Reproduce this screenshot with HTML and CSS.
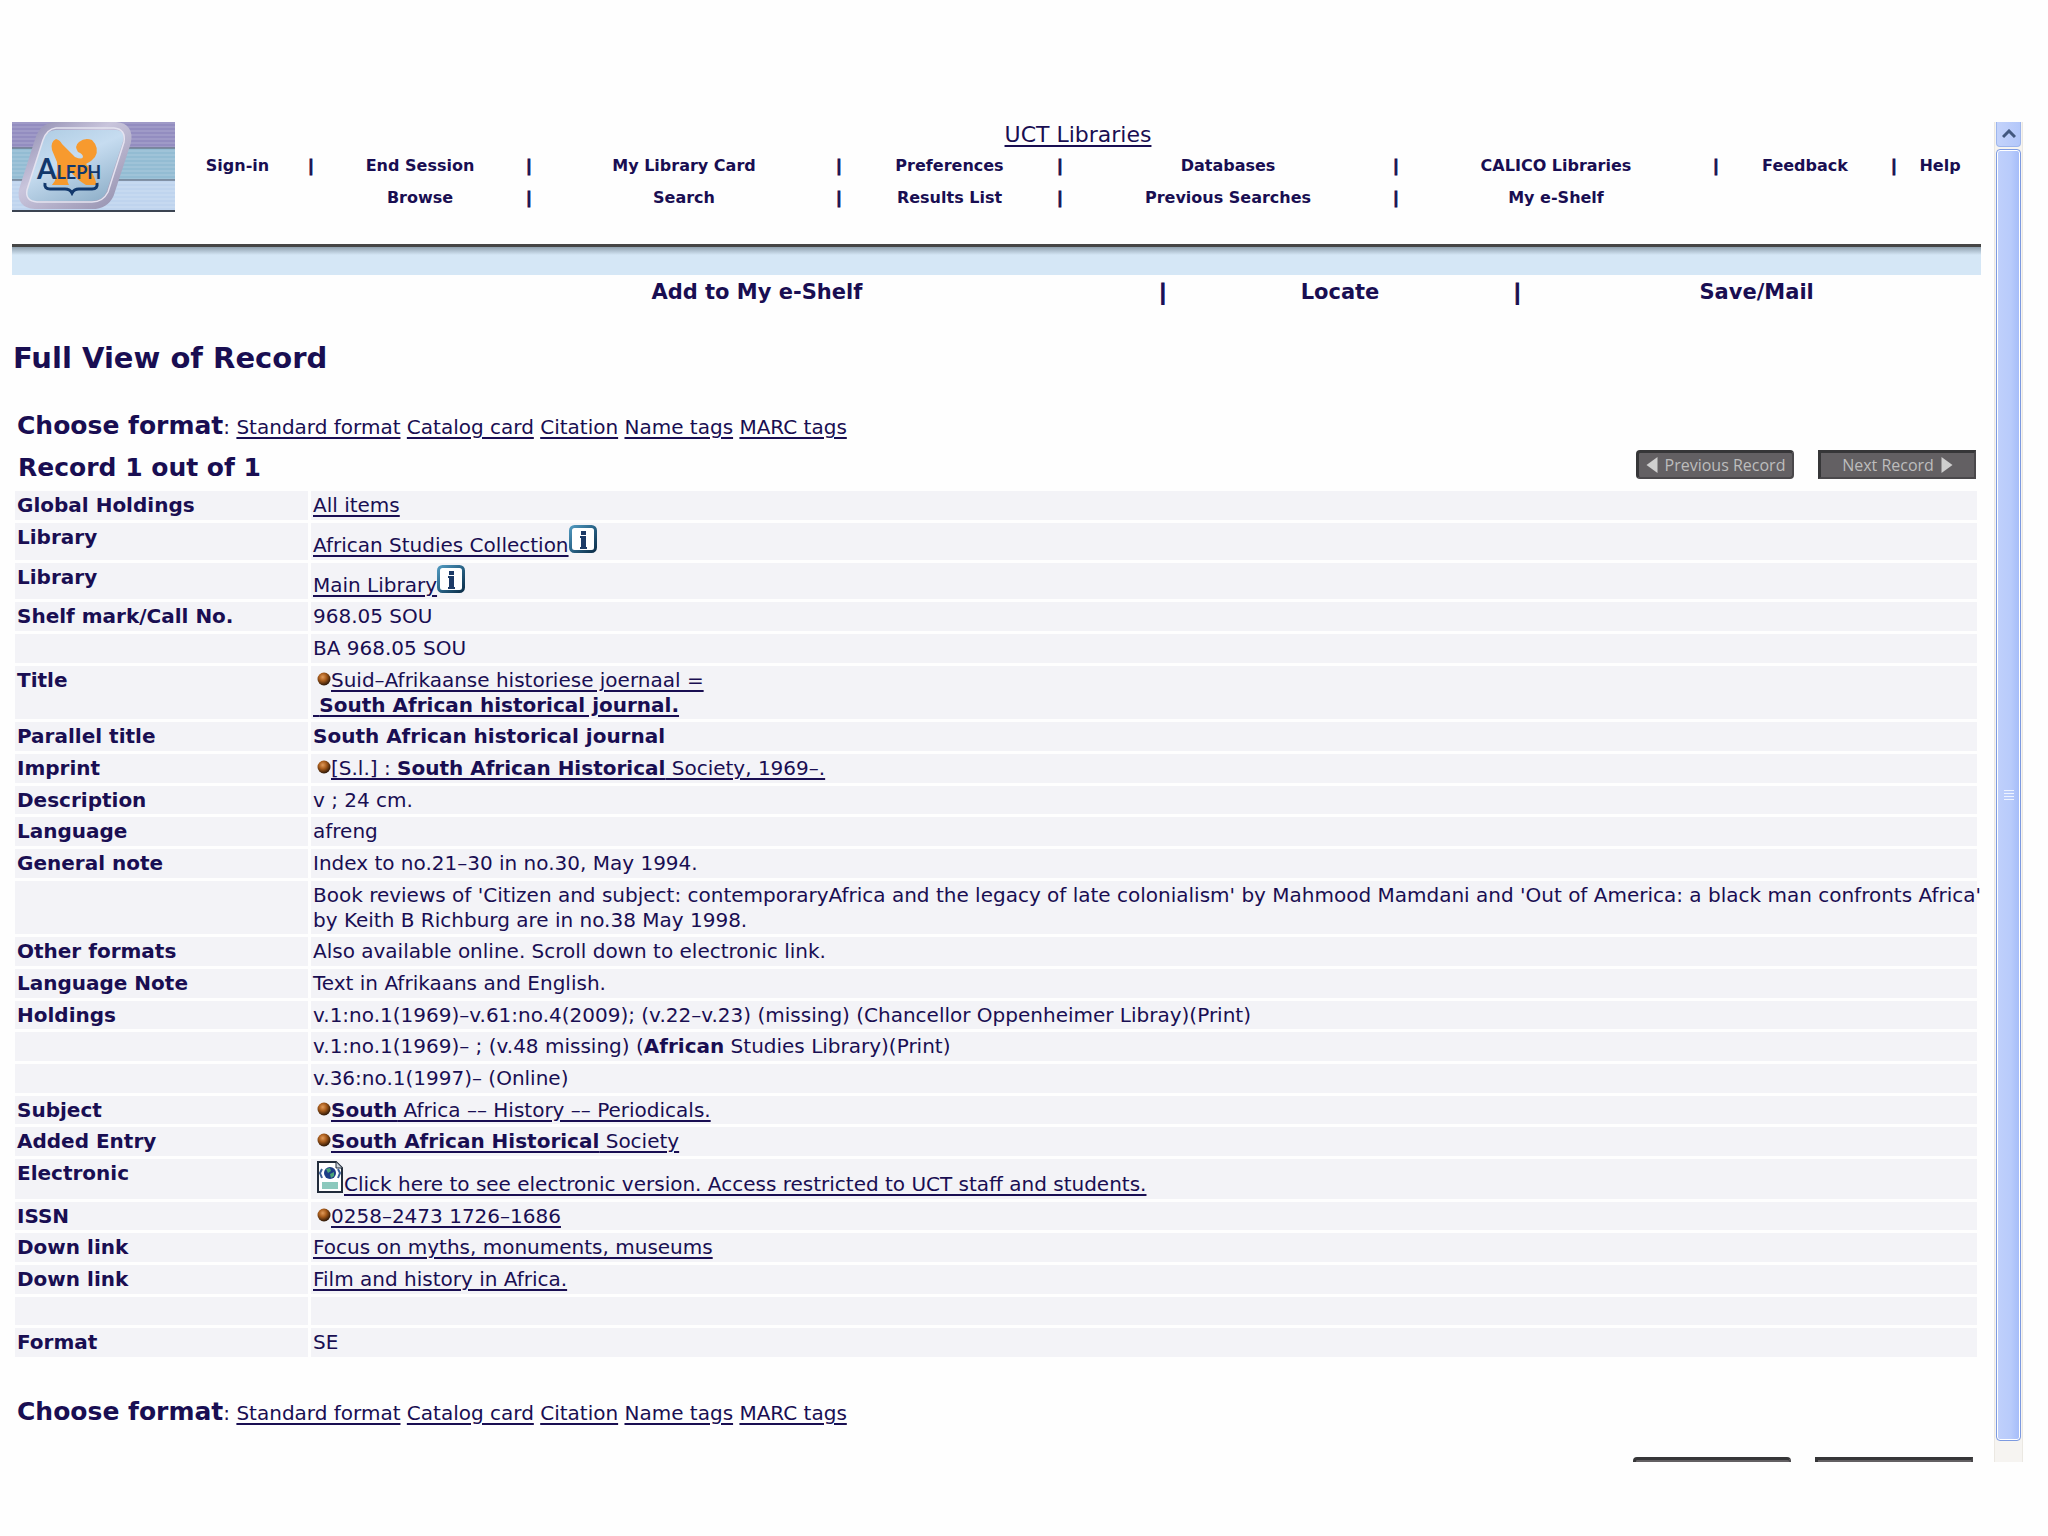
FILE: index.html
```
<!DOCTYPE html>
<html lang="en">
<head>
    <meta charset="UTF-8">
    <meta name="viewport" content="width=device-width, initial-scale=1.0">
    <title>UCT Libraries - Full View of Record</title>
    <link rel="stylesheet" href="styles.css">
</head>
<body>
    <!-- shared icons -->
    <svg class="sprite" aria-hidden="true">
        <defs>
            <linearGradient id="infoEdge" x1="0" y1="0" x2="1" y2="1">
                <stop offset="0" stop-color="#4f97bd"/>
                <stop offset="0.5" stop-color="#2a6488"/>
                <stop offset="1" stop-color="#0c2f4a"/>
            </linearGradient>
            <radialGradient id="ball" cx="0.4" cy="0.35" r="0.65">
                <stop offset="0" stop-color="#e09a5a"/>
                <stop offset="0.45" stop-color="#a85c1c"/>
                <stop offset="1" stop-color="#2c1606"/>
            </radialGradient>
        </defs>
        <symbol id="info" viewBox="0 0 28 28">
            <rect x="1.5" y="1.5" width="25" height="25" rx="4" fill="#fff" stroke="url(#infoEdge)" stroke-width="3"/>
            <path d="M12 6h5v4h-5zM11 11h6v11h1v2h-7v-2h1v-9h-1z" fill="#1c3a66"/>
        </symbol>
        <symbol id="dot" viewBox="0 0 14 14">
            <circle cx="7" cy="7" r="6.5" fill="url(#ball)"/>
        </symbol>
    </svg>

    <div class="window">
        <main class="page">
            <header class="header">
                <svg class="logo" viewBox="0 0 163 90" role="img" aria-label="Aleph">
                    <defs>
                        <linearGradient id="plate" x1="0" y1="0" x2="0.6" y2="1">
                            <stop offset="0" stop-color="#a9c8e0"/>
                            <stop offset="0.5" stop-color="#c6dcf0"/>
                            <stop offset="1" stop-color="#93b3cc"/>
                        </linearGradient>
                        <linearGradient id="rim" x1="0" y1="0" x2="1" y2="1">
                            <stop offset="0" stop-color="#8f8cb0"/>
                            <stop offset="0.4" stop-color="#c9c5dc"/>
                            <stop offset="1" stop-color="#9490ae"/>
                        </linearGradient>
                        <pattern id="lines" width="8" height="4" patternUnits="userSpaceOnUse">
                            <path d="M0 1h8" stroke="#fff" stroke-opacity="0.22"/>
                        </pattern>
                    </defs>
                    <rect width="163" height="26" fill="#938dc0"/>
                    <rect y="26" width="163" height="32" fill="#93bcd3"/>
                    <rect y="58" width="163" height="32" fill="#bfd4ee"/>
                    <rect width="163" height="90" fill="url(#lines)"/>
                    <path d="M0 26h163M0 58h163" stroke="#6f7c90" stroke-width="1.5"/>
                    <path d="M0 89h163" stroke="#3c4452" stroke-width="2"/>
                    <path d="M43 4H104Q118 5 115 20L98 72Q93 83 80 83H23Q8 82 11 68L27 18Q31 5 43 4Z" fill="url(#plate)" stroke="url(#rim)" stroke-width="8"/>
                    <path d="M44 6H102Q114 7 112 20L96 70Q91 80 80 80H25Q13 79 15 68L31 18Q35 7 44 6Z" fill="none" stroke="#e4e3f0" stroke-width="1.5"/>
                    <path d="M40 28Q38 20 44 17Q48 18 50 22L63 35Q70 38 71 35Q71 32 66 30Q62 24 67 20Q73 15 80 18Q88 26 83 35Q79 40 74 42Q80 47 85 63H74Q64 57 59 50Q53 56 57 63H40Q47 55 45 40Z" fill="#f79a2e"/>
                    <text x="25" y="57" class="logo-text"><tspan class="logo-cap">A</tspan>LEPH</text>
                    <path d="M33 61Q32 67 38 67H53Q58 67 60 71Q62 67 67 67H80Q86 67 85 61" fill="none" stroke="#12386c" stroke-width="3"/>
                </svg>
                <nav class="nav">
                    <a class="nav-title" href="#">UCT Libraries</a>
                    <div class="nav-row">
                        <a class="first" href="#">Sign-in</a><span>|</span>
                        <a href="#">End Session</a><span>|</span>
                        <a href="#">My Library Card</a><span>|</span>
                        <a href="#">Preferences</a><span>|</span>
                        <a href="#">Databases</a><span>|</span>
                        <a href="#">CALICO Libraries</a><span>|</span>
                        <a href="#">Feedback</a><span>|</span>
                        <a href="#">Help</a>
                    </div>
                    <div class="nav-row">
                        <i></i><i></i>
                        <a href="#">Browse</a><span>|</span>
                        <a href="#">Search</a><span>|</span>
                        <a href="#">Results List</a><span>|</span>
                        <a href="#">Previous Searches</a><span>|</span>
                        <a href="#">My e-Shelf</a>
                    </div>
                </nav>
            </header>

            <div class="band"></div>

            <nav class="actions">
                <a class="add" href="#">Add to My e-Shelf</a><span>|</span>
                <a href="#">Locate</a><span>|</span>
                <a class="save" href="#">Save/Mail</a>
            </nav>

            <h1>Full View of Record</h1>

            <p class="formats">
                <strong>Choose format</strong>:
                <a href="#">Standard format</a>
                <a href="#">Catalog card</a>
                <a href="#">Citation</a>
                <a href="#">Name tags</a>
                <a href="#">MARC tags</a>
            </p>

            <div class="record-bar">
                <h2>Record 1 out of 1</h2>
                <div class="pager">
                    <button type="button" class="rounded"><svg viewBox="0 0 11 16"><path d="M11 0v16L0 8z"/></svg>Previous Record</button>
                    <button type="button">Next Record<svg viewBox="0 0 11 16"><path d="M0 0v16l11-8z"/></svg></button>
                </div>
            </div>

            <table class="record">
                <tr><th>Global Holdings</th><td><a href="#">All items</a></td></tr>
                <tr><th>Library</th><td><a href="#">African Studies Collection</a><svg class="info"><use href="#info"/></svg></td></tr>
                <tr><th>Library</th><td><a href="#">Main Library</a><svg class="info"><use href="#info"/></svg></td></tr>
                <tr><th>Shelf mark/Call No.</th><td>968.05 SOU</td></tr>
                <tr><th></th><td>BA 968.05 SOU</td></tr>
                <tr><th>Title</th><td><svg class="dot"><use href="#dot"/></svg><a href="#">Suid–Afrikaanse historiese joernaal =<br>&nbsp;<b>South African historical journal.</b></a></td></tr>
                <tr><th>Parallel title</th><td><b>South African historical journal</b></td></tr>
                <tr><th>Imprint</th><td><svg class="dot"><use href="#dot"/></svg><a href="#">[S.l.] : <b>South African Historical</b> Society, 1969–.</a></td></tr>
                <tr><th>Description</th><td>v ; 24 cm.</td></tr>
                <tr><th>Language</th><td>afreng</td></tr>
                <tr><th>General note</th><td>Index to no.21–30 in no.30, May 1994.</td></tr>
                <tr><th></th><td class="note">Book reviews of 'Citizen and subject: contemporaryAfrica and the legacy of late colonialism' by Mahmood Mamdani and 'Out of America: a black man confronts Africa'<br>by Keith B Richburg are in no.38 May 1998.</td></tr>
                <tr><th>Other formats</th><td>Also available online. Scroll down to electronic link.</td></tr>
                <tr><th>Language Note</th><td>Text in Afrikaans and English.</td></tr>
                <tr><th>Holdings</th><td>v.1:no.1(1969)–v.61:no.4(2009); (v.22–v.23) (missing) (Chancellor Oppenheimer Libray)(Print)</td></tr>
                <tr><th></th><td>v.1:no.1(1969)– ; (v.48 missing) (<b>African</b> Studies Library)(Print)</td></tr>
                <tr><th></th><td>v.36:no.1(1997)– (Online)</td></tr>
                <tr><th>Subject</th><td><svg class="dot"><use href="#dot"/></svg><a href="#"><b>South</b> Africa –– History –– Periodicals.</a></td></tr>
                <tr><th>Added Entry</th><td><svg class="dot"><use href="#dot"/></svg><a href="#"><b>South African Historical</b> Society</a></td></tr>
                <tr><th>Electronic</th><td><svg class="doc" viewBox="0 0 26 32">
                    <path d="M1 1h18l6 6v24H1z" fill="#fff" stroke="#222c3c" stroke-width="2"/>
                    <path d="M19 1v6h6" fill="#ccd3dc" stroke="#222c3c"/>
                    <circle cx="13" cy="12" r="6" fill="#1d3d86"/>
                    <path d="M9 8l4-1 1 3-3 2zM13 13l4-2v4l-3 2z" fill="#4aa578"/>
                    <path d="M5 8L3 12l2 5M21 8l2 4-2 5" fill="none" stroke="#3d5f96" stroke-width="2"/>
                    <path d="M5 21h16v7H5z" fill="#8cc9bd"/>
                </svg><a href="#">Click here to see electronic version. Access restricted to UCT staff and students.</a></td></tr>
                <tr><th>ISSN</th><td><svg class="dot"><use href="#dot"/></svg><a href="#">0258–2473 1726–1686</a></td></tr>
                <tr><th>Down link</th><td><a href="#">Focus on myths, monuments, museums</a></td></tr>
                <tr><th>Down link</th><td><a href="#">Film and history in Africa.</a></td></tr>
                <tr><th></th><td>&nbsp;</td></tr>
                <tr><th>Format</th><td>SE</td></tr>
            </table>

            <p class="formats bottom">
                <strong>Choose format</strong>:
                <a href="#">Standard format</a>
                <a href="#">Catalog card</a>
                <a href="#">Citation</a>
                <a href="#">Name tags</a>
                <a href="#">MARC tags</a>
            </p>

            <div class="pager bottom-pager">
                <button type="button" class="rounded" aria-label="Previous Record"></button>
                <button type="button" aria-label="Next Record"></button>
            </div>
        </main>

        <div class="scrollbar">
            <button type="button" class="scroll-up" aria-label="Scroll up"><svg viewBox="0 0 14 10"><path d="M1 8l6-6 6 6" fill="none" stroke="#43587f" stroke-width="3"/></svg></button>
            <div class="scroll-thumb"><i></i><i></i><i></i><i></i></div>
        </div>
    </div>
</body>
</html>
```
FILE: styles.css
```
* {
    box-sizing: border-box;
}
body {
    margin: 0;
    padding: 122px 25px 0 12px;
    background: #fefefe;
    color: #190e52;
    font-family: "DejaVu Sans", sans-serif;
    font-size: 20px;
    line-height: 25px;
}
a {
    color: inherit;
    text-underline-offset: 3px;
    text-decoration-thickness: 2px;
}
.sprite {
    position: absolute;
    width: 0;
    height: 0;
}

.window {
    display: flex;
    gap: 13px;
    height: calc(100vh - 196px);
    overflow: hidden;
}
.page {
    flex: 1;
    min-width: 0;
}

/* header */
.header {
    display: flex;
    height: 122px;
}
.logo {
    flex: none;
    width: 163px;
    height: 90px;
}
.logo-text {
    font: bold 18px Lato, sans-serif;
    fill: #12386c;
}
.logo-cap {
    font-size: 28px;
}
.nav {
    flex: 1;
    text-align: center;
    font-size: 16px;
    font-weight: bold;
}
.nav-title {
    display: block;
    font-size: 22px;
    font-weight: normal;
    line-height: 26px;
    padding-bottom: 2px;
}
.nav-row {
    display: grid;
    grid-template-columns: 131fr 10px 208fr 10px 300fr 10px 211fr 10px 326fr 10px 310fr 10px 168fr 10px 82fr;
    height: 32px;
    line-height: 32px;
}
.nav-row a {
    text-decoration: none;
}
.nav-row .first {
    padding-right: 6px;
}
.nav-row span,
.actions span {
    align-self: center;
    justify-self: center;
    -webkit-text-stroke: 1px;
}

.band {
    height: 31px;
    border-top: 3px solid #454545;
    background: linear-gradient(#8fa0ae, #d5e7f6 8px);
}
.actions {
    display: grid;
    grid-template-columns: 1144fr 10px 344fr 10px 458fr;
    text-align: center;
    font-size: 21px;
    font-weight: bold;
    line-height: 34px;
}
.actions a {
    text-decoration: none;
}
.actions .add {
    padding-left: 344px;
}
.actions .save {
    padding-left: 10px;
}

h1 {
    margin: 28px 0 0;
    padding-left: 1px;
    font-size: 29px;
    line-height: 42px;
}
.formats {
    margin: 28px 0 0;
    padding-left: 5px;
    line-height: 38px;
}
.formats strong {
    font-size: 25px;
}
.record-bar {
    display: flex;
    justify-content: space-between;
    align-items: flex-start;
    height: 42px;
    padding: 4px 5px 0 6px;
}
h2 {
    margin: 0;
    font-size: 25px;
    line-height: 36px;
}

.pager {
    display: flex;
    gap: 24px;
}
.pager button {
    display: flex;
    align-items: center;
    justify-content: center;
    gap: 7px;
    width: 158px;
    height: 29px;
    padding: 0;
    border: 2px solid #4a484b;
    border-top: 3px solid #363638;
    border-left: 3px solid #363638;
    background: #636063;
    color: #bdbdbd;
    font-family: "Open Sans", sans-serif;
    font-size: 16px;
    white-space: nowrap;
}
.pager .rounded {
    border-radius: 4px;
}
.pager svg {
    width: 12px;
    height: 16px;
    fill: #cfcfcf;
}

/* record table */
.record {
    width: calc(100% - 1px);
    border-spacing: 3px;
    table-layout: fixed;
}
.record th,
.record td {
    padding: 2px;
    background: #f3f3f7;
    text-align: left;
    vertical-align: top;
}
.record tr:nth-child(3n) > * {
    padding-bottom: 1px;
}
.record th {
    width: 293px;
}
.record .note {
    white-space: nowrap;
}
.info {
    width: 28px;
    height: 28px;
    vertical-align: -1px;
}
.dot {
    width: 14px;
    height: 14px;
    margin-left: 4px;
    vertical-align: 1px;
}
.doc {
    width: 26px;
    height: 32px;
    margin: 0 1px 0 4px;
    vertical-align: -2px;
}

.bottom {
    margin-top: 33px;
}
.bottom-pager {
    justify-content: flex-end;
    padding: 25px 8px 0 0;
}

/* scrollbar */
.scrollbar {
    display: flex;
    flex-direction: column;
    flex: none;
    width: 29px;
    padding: 0 1px;
    border: 1px solid #ebe8e2;
    border-width: 0 1px;
    background: #f6f4f1;
}
.scroll-up {
    height: 25px;
    padding: 0;
    border: 1px solid #9db5ec;
    border-top: 0;
    border-radius: 0 0 4px 4px;
    background: linear-gradient(90deg, #c4d3fb, #b3c7fa);
    line-height: 0;
}
.scroll-up svg {
    width: 14px;
    height: 10px;
}
.scroll-thumb {
    display: flex;
    flex: 1;
    flex-direction: column;
    align-items: center;
    justify-content: center;
    gap: 2px;
    margin: 2px 0 21px;
    border: 1px solid #7d9ae0;
    border-radius: 4px;
    background: linear-gradient(90deg, #c0d0fb, #b8cbfb 60%, #a3bbf9);
    box-shadow: inset 0 0 0 1px #fff;
}
.scroll-thumb i {
    width: 10px;
    height: 1px;
    background: #eef3ff;
}
```
